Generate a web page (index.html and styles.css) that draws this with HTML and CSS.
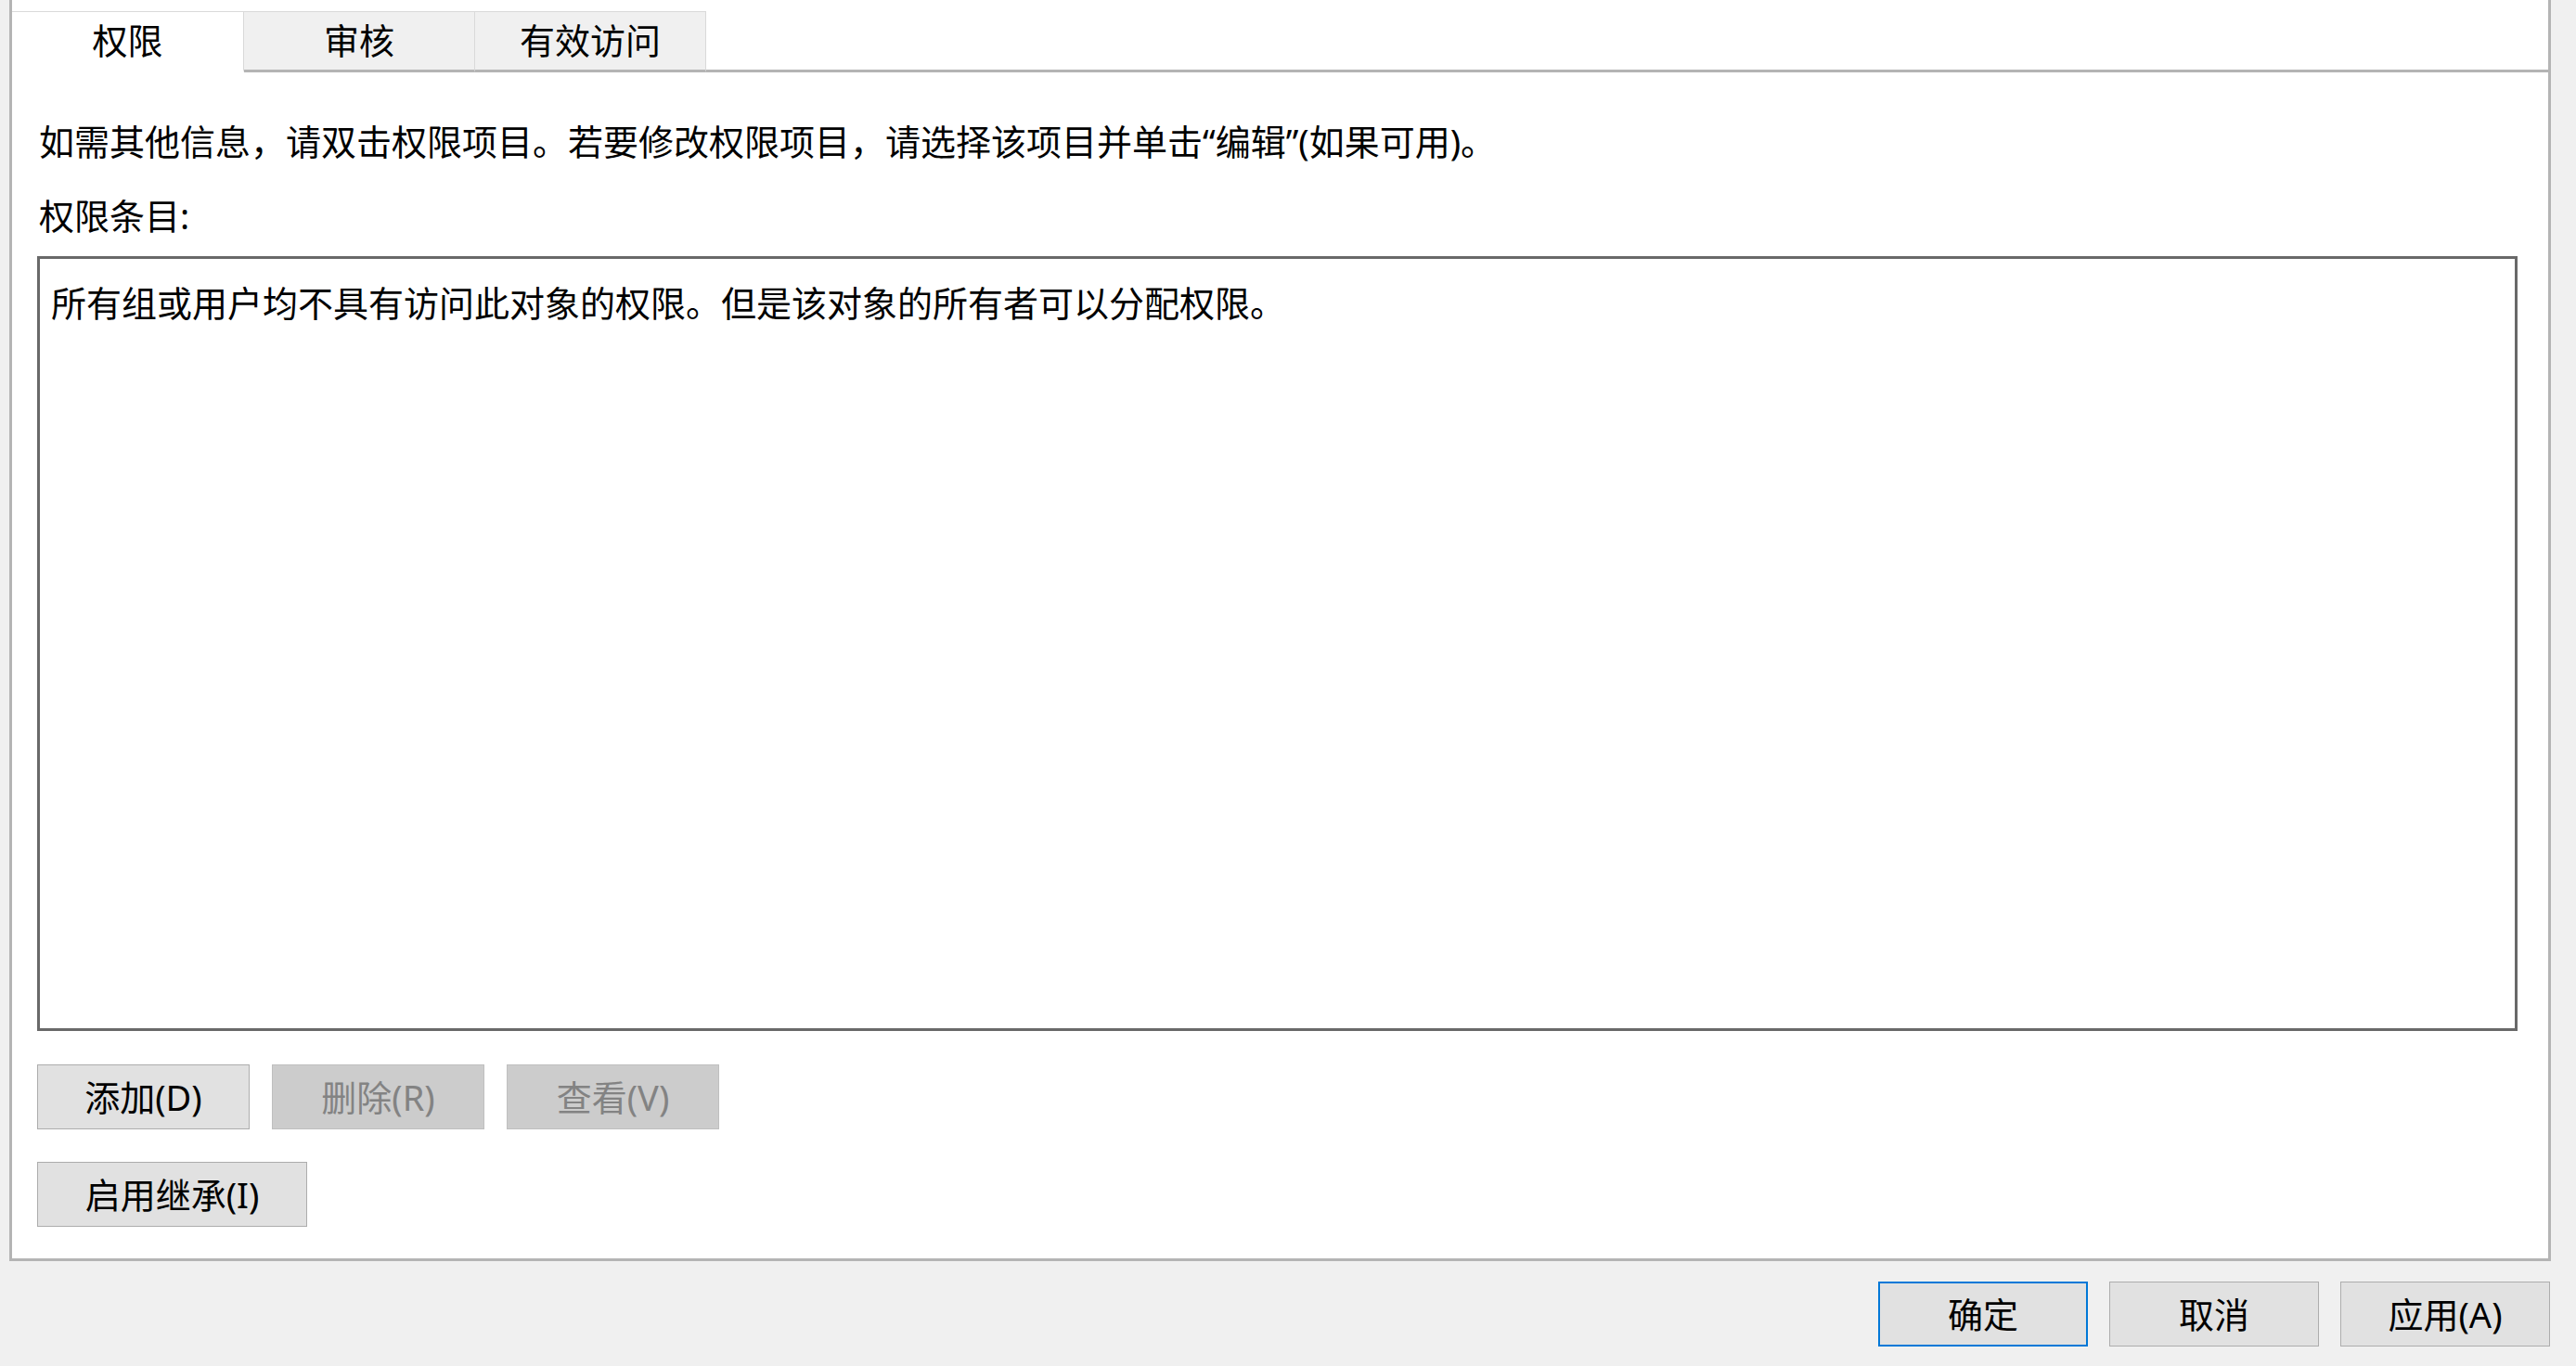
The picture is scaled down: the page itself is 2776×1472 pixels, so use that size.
FILE: index.html
```html
<!DOCTYPE html>
<html lang="zh-CN">
<head>
<meta charset="utf-8">
<title>权限</title>
<link rel="stylesheet" href="styles.css">
</head>
<body>
<div class="panel">
  <div class="tabs">
    <div class="tab tab-active">权限</div>
    <div class="tab">审核</div>
    <div class="tab">有效访问</div>
    <div class="tab-fill"></div>
  </div>
  <div class="content">
    <p class="info">如需其他信息，请双击权限项目。若要修改权限项目，请选择该项目并单击“编辑”(如果可用)。</p>
    <p class="label">权限条目:</p>
    <div class="listbox">
      <p class="list-msg">所有组或用户均不具有访问此对象的权限。但是该对象的所有者可以分配权限。</p>
    </div>
    <div class="btn-row">
      <button class="btn">添加(D)</button>
      <button class="btn btn-disabled">删除(R)</button>
      <button class="btn btn-disabled">查看(V)</button>
    </div>
    <div class="btn-row btn-row-2">
      <button class="btn btn-wide">启用继承(I)</button>
    </div>
  </div>
</div>
<div class="footer">
  <button class="btn btn-foot btn-default">确定</button>
  <button class="btn btn-foot">取消</button>
  <button class="btn btn-foot">应用(A)</button>
</div>
</body>
</html>
```

FILE: styles.css
```css
html, body {
  margin: 0;
  padding: 0;
}
body {
  width: 2776px;
  height: 1472px;
  background: #f0f0f0;
  font-family: "Noto Sans", "Noto Sans CJK SC", sans-serif;
  font-size: 38px;
  color: #000;
  overflow: hidden;
}
.panel {
  margin-left: 10px;
  width: 2733px;
  height: 1356px;
  background: #fff;
  border-left: 3px solid #b4b4b4;
  border-right: 3px solid #b4b4b4;
  border-bottom: 3px solid #b4b4b4;
  display: flex;
  flex-direction: column;
}
.tabs {
  display: flex;
  padding-top: 12px;
  height: 66px;
}
.tab {
  width: 249px;
  box-sizing: border-box;
  height: 66px;
  border-top: 1px solid #d9d9d9;
  border-right: 1px solid #d9d9d9;
  border-bottom: 3px solid #b4b4b4;
  background: #f0f0f0;
  display: flex;
  align-items: center;
  justify-content: center;
  line-height: 1;
  padding-bottom: 2px;
}
.tab-active {
  width: 250px;
  background: #fff;
  border-bottom: 3px solid #fff;
}
.tab-fill {
  flex: 1;
  border-bottom: 3px solid #b4b4b4;
}
.content {
  flex: 1;
  display: flex;
  flex-direction: column;
  padding: 0 33px 35px 27px;
}
.info {
  margin: 49px 0 0 2px;
  line-height: 50px;
  white-space: nowrap;
}
.label {
  margin: 30px 0 0 2px;
  line-height: 50px;
}
.listbox {
  box-sizing: border-box;
  margin-top: 19px;
  height: 835px;
  border: 3px solid #696969;
  background: #fff;
  padding: 22px 12px 0;
}
.list-msg {
  margin: 0;
  line-height: 50px;
}
.btn-row {
  display: flex;
  gap: 24px;
  margin-top: 36px;
}
.btn-row-2 {
  margin-top: 35px;
}
.btn {
  font-family: inherit;
  font-size: 38px;
  color: #000;
  height: 70px;
  width: 229px;
  padding: 0;
  margin: 0;
  background: #e1e1e1;
  border: 1px solid #adadad;
  border-radius: 0;
  line-height: 1;
  display: flex;
  align-items: center;
  justify-content: center;
}
.btn-disabled {
  background: #cccccc;
  border-color: #bfbfbf;
  color: #838383;
}
.btn-wide {
  width: 291px;
}
.footer {
  display: flex;
  justify-content: flex-end;
  gap: 23px;
  padding-right: 28px;
  margin-top: 22px;
}
.btn-foot {
  width: 226px;
  height: 70px;
}
.btn-default {
  border: 2px solid #0078d7;
}
```
